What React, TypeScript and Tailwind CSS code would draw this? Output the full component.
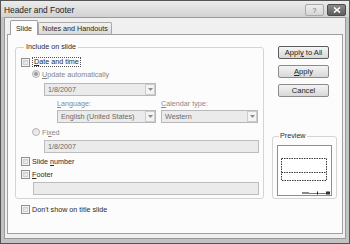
import type { ReactNode } from "react";

function Check() {
  return (
    <span className="w-[9px] h-[9px] shrink-0 border border-[#8f8f8f] bg-[#f4f4f4] p-[1px]">
      <span className="block w-full h-full border border-[#cfcfcf] bg-gradient-to-br from-[#d6d6d6] to-[#f6f6f6]" />
    </span>
  );
}

function Radio({ on = false }: { on?: boolean }) {
  return (
    <span className="w-[8px] h-[8px] shrink-0 rounded-full border border-[#b3b3b3] bg-gradient-to-br from-[#e0e0e0] to-[#f6f6f6] flex items-center justify-center">
      {on && <span className="w-[4px] h-[4px] rounded-full bg-[#9c9c9c]" />}
    </span>
  );
}

function Combo({ value, className }: { value: string; className: string }) {
  return (
    <div className={`h-[13px] border border-[#b8b8b8] bg-[#ebebeb] flex items-center ${className}`}>
      <span className="flex-1 pl-[3px] text-[#6a6a6a] whitespace-nowrap">{value}</span>
      <span className="w-[10px] h-[11px] border border-[#cdcdcd] bg-[#f3f3f3] flex items-center justify-center">
        <svg width="5" height="3" viewBox="0 0 5 3">
          <path d="M0 0h5L2.5 3z" fill="#8c8c8c" />
        </svg>
      </span>
    </div>
  );
}

function Field({ value, className }: { value?: string; className: string }) {
  return (
    <div className={`h-[13px] border border-[#bdbdbd] bg-[#ebebeb] flex items-center pl-[3px] text-[#6a6a6a] ${className}`}>
      {value}
    </div>
  );
}

function Btn({ children, strong = false }: { children: ReactNode; strong?: boolean }) {
  return (
    <div
      className={`w-[51px] h-[13px] rounded-[2px] border bg-gradient-to-b from-[#f4f4f4] to-[#d8d8d8] flex items-center justify-center whitespace-pre text-[7.6px] text-[#222] ${
        strong ? "border-[#5c5c5c]" : "border-[#8a8a8a]"
      }`}
    >
      {children}
    </div>
  );
}

export default function App() {
  return (
    <div
      className="w-[350px] h-[244px] bg-[#c2c2c2] border border-[#555] flex flex-col text-[7.2px] leading-[9px] text-[#2a2a2a]"
      style={{ fontFamily: '"Liberation Sans", Arial, sans-serif' }}
    >
      {/* title bar */}
      <div className="h-[16px] shrink-0 flex items-start pl-[3px] pr-[3px] bg-gradient-to-b from-[#ececec] to-[#d2d2d2]">
        <span className="mt-[4px] text-[8.4px] leading-[10px] text-[#1c1c1c]">Header and Footer</span>
        <div className="ml-auto mt-[3px] flex gap-[3px]">
          <div className="w-[19px] h-[12px] rounded-[2px] border border-[#a8a8a8] bg-gradient-to-b from-[#ededed] to-[#d6d6d6] flex items-center justify-center text-[7px] text-[#6d6d6d]">
            ?
          </div>
          <div className="w-[19px] h-[12px] rounded-[2px] border border-[#4c4c4c] bg-gradient-to-b from-[#8a8a8a] to-[#5e5e5e] flex items-center justify-center">
            <svg width="8" height="6" viewBox="0 0 8 6">
              <path d="M1 0.5L7 5.5M7 0.5L1 5.5" stroke="#fff" strokeWidth="1.6" />
            </svg>
          </div>
        </div>
      </div>

      {/* client area */}
      <div className="flex-1 mx-[3px] mb-[4px] border border-[#9a9a9a] bg-[#f0f0f0] px-[2px] pt-[2px] pb-[4px] flex flex-col">
        {/* tabs */}
        <div className="h-[14px] shrink-0 flex items-end pl-[3px]">
          <div className="relative z-10 -mb-[1px] w-[28px] h-[15px] rounded-t-[2px] border border-b-0 border-[#a0a0a0] bg-[#fcfcfc] flex items-center justify-center">
            Slide
          </div>
          <div className="w-[74px] h-[12px] rounded-t-[2px] border border-b-0 border-[#a8a8a8] bg-gradient-to-b from-[#f2f2f2] to-[#dadada] flex items-center justify-center">
            Notes and Handouts
          </div>
        </div>

        {/* panel */}
        <div className="flex-1 border border-[#a0a0a0] bg-[#fcfcfc] pt-[7px] pl-[7px] flex">
          {/* left column */}
          <div className="flex flex-col">
            <fieldset className="w-[249px] border border-[#d4d4d4] rounded-[3px] pl-[5px] pt-[5px] pb-[3px]">
              <legend className="ml-[3px] px-[2px] leading-[10px]">Include on slide</legend>

              <div className="h-[10px] flex items-center gap-[2px]">
                <Check />
                <span className="border border-dotted border-[#555] px-[1px] leading-[8px]">
                  <u>D</u>ate and time
                </span>
              </div>

              <div className="mt-[2px] ml-[11px] h-[10px] flex items-center gap-[2px] text-[#858585]">
                <Radio on />
                <span>
                  <u>U</u>pdate automatically
                </span>
              </div>

              <Combo value="1/8/2007" className="mt-[4px] ml-[23px] w-[112px]" />

              <div className="mt-[3px] ml-[36px] h-[9px] flex text-[#8a8a8a]">
                <span className="w-[104px]">
                  <u>L</u>anguage:
                </span>
                <span>
                  <u>C</u>alendar type:
                </span>
              </div>

              <div className="mt-[2px] ml-[36px] flex gap-[5px]">
                <Combo value="English (United States)" className="w-[99px]" />
                <Combo value="Western" className="w-[97px]" />
              </div>

              <div className="mt-[4px] ml-[11px] h-[10px] flex items-center gap-[2px] text-[#858585]">
                <Radio />
                <span>
                  Fi<u>x</u>ed
                </span>
              </div>

              <Field value="1/8/2007" className="mt-[3px] ml-[23px] w-[215px]" />

              <div className="mt-[3px] h-[10px] flex items-center gap-[2px]">
                <Check />
                <span>
                  Slide <u>n</u>umber
                </span>
              </div>

              <div className="mt-[3px] h-[10px] flex items-center gap-[2px]">
                <Check />
                <span>
                  <u>F</u>ooter
                </span>
              </div>

              <Field className="mt-[3px] ml-[12px] w-[226px]" />
            </fieldset>

            <div className="mt-[5px] ml-[6px] h-[10px] flex items-center gap-[2px]">
              <Check />
              <span>Don't show on title slide</span>
            </div>
          </div>

          {/* right column */}
          <div className="ml-[8px] w-[65px] flex flex-col">
            <div className="mt-[4px] pl-[6px] flex flex-col gap-[6px]">
              <Btn strong>
                <span>
                  Appl<u>y</u> to All
                </span>
              </Btn>
              <Btn>
                <span>
                  <u>A</u>pply
                </span>
              </Btn>
              <Btn>Cancel</Btn>
            </div>

            <fieldset className="mt-[34px] border border-[#d4d4d4] rounded-[3px] pl-[4px] pt-[4px] pb-[2px]">
              <legend className="ml-[2px] px-[1px] leading-[10px]">Preview</legend>
              <div className="w-[55px] h-[51px] border border-[#8e8e8e] bg-white">
                <svg width="53" height="49" viewBox="0 0 53 49">
                  <rect x="3.5" y="12.5" width="45" height="22" fill="none" stroke="#3a3a3a" strokeDasharray="1.5 1" />
                  <line x1="3.5" y1="26.5" x2="48.5" y2="26.5" stroke="#3a3a3a" strokeDasharray="1.5 1" />
                  <line x1="24" y1="47.5" x2="52" y2="47.5" stroke="#7a7a7a" />
                  <rect x="24" y="46" width="7" height="2" fill="#8a8a8a" />
                  <rect x="39" y="45.5" width="1" height="3" fill="#222" />
                  <rect x="48" y="45.5" width="4" height="3" fill="#333" />
                </svg>
              </div>
            </fieldset>
          </div>
        </div>
      </div>
    </div>
  );
}
